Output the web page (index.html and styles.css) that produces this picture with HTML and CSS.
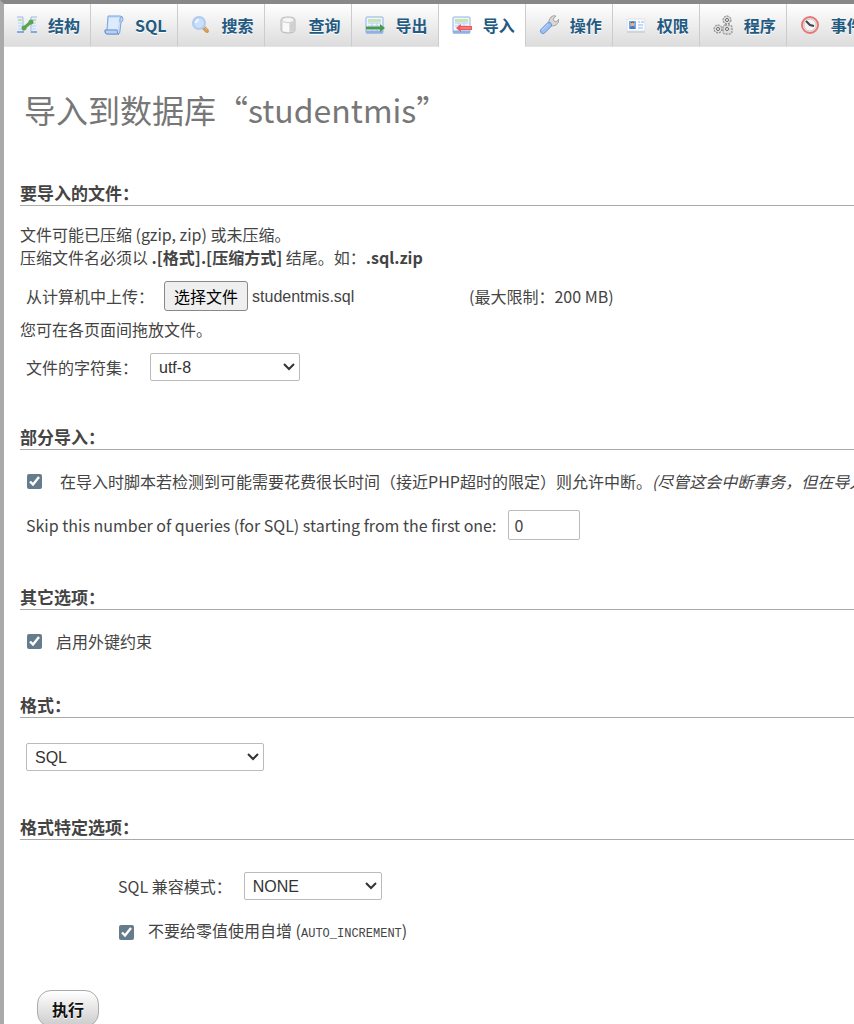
FILE: index.html
```html
<!DOCTYPE html>
<html lang="zh-CN">
<head>
    <meta charset="UTF-8">
    <meta name="viewport" content="width=device-width, initial-scale=1.0">
    <title>导入到数据库</title>
    <link rel="stylesheet" href="styles.css">
</head>
<body>

    <nav class="tabs">
        <a class="tab" href="#structure">
            <svg class="icon" viewBox="0 0 20 20">
                <path d="M0 2h6v16H0zM14 2h6v16h-6z" fill="#e6effb"/>
                <path d="M0 2h6v16M20 2h-6v16" fill="none" stroke="#9dbbe6"/>
                <path d="M1 5h4M15 5h4" stroke="#bfe0a8" stroke-width="2"/>
                <path d="M1 8h4M1 11h4M1 14h4M15 8h4M15 11h4M15 14h4" stroke="#bcd2ef"/>
                <path d="M0 17h7M14 17h6" stroke="#86a9dd" stroke-width="2"/>
                <path d="M7 13L14 7" stroke="#5aa650" stroke-width="3"/>
                <circle cx="7" cy="13" r="2.500" fill="#5aa650"/>
                <circle cx="14" cy="7" r="2.500" fill="#5aa650"/>
            </svg>
            结构
        </a>
        <a class="tab" href="#sql">
            <svg class="icon" viewBox="0 0 20 20">
                <path d="M4 1H16Q19 1 19 4Q19 7 17 7L16 16Q16 19 14 19H3Q1 19 1 17V15H3Z" fill="#c3dcfa" stroke="#7fa5d8"/>
                <path d="M5 3H15L14 14H4Z" fill="#dcebfe"/>
                <path d="M1 15H13Q13 19 15 19H3Q1 19 1 15Z" fill="#b5d2f6" stroke="#6c92c6"/>
                <path d="M16 7V4Q16 2 18 2" fill="none" stroke="#7fa5d8"/>
            </svg>
            SQL
        </a>
        <a class="tab" href="#search">
            <svg class="icon" viewBox="0 0 20 20">
                <path d="M12 12L16 16" stroke="#cf9c5b" stroke-width="4" stroke-linecap="round"/>
                <path d="M12 11L16 15" stroke="#e5bb7f" stroke-width="1"/>
                <circle cx="8" cy="8" r="6" fill="#c9dffa" stroke="#b1caee" stroke-width="2"/>
                <path d="M5 8Q5 5 8 5" fill="none" stroke="#eef6ff" stroke-width="2"/>
            </svg>
            搜索
        </a>
        <a class="tab" href="#query">
            <svg class="icon" viewBox="0 0 20 20">
                <path d="M3 5Q3 2 10 2T17 5V15Q17 18 10 18T3 15Z" fill="#e2e2e2" stroke="#b9b9b9"/>
                <path d="M5 7Q9 9 11 8V17Q7 17 5 16Z" fill="#f9f9f9"/>
                <path d="M12 8Q15 8 16 6V15Q15 17 12 17Z" fill="#d0d0d0"/>
                <ellipse cx="10" cy="5" rx="6" ry="2.500" fill="#f7f7f7" stroke="#d0d0d0"/>
            </svg>
            查询
        </a>
        <a class="tab" href="#export">
            <svg class="icon" viewBox="0 0 20 20">
                <rect x="1" y="2" width="17" height="16" rx="1" fill="#f0f6fe" stroke="#8fb1e3"/>
                <rect x="3" y="4" width="13" height="3" fill="#c9e3b3"/>
                <path d="M3 8h13M3 11h13M7 8v8M12 8v8" stroke="#b5cdee"/>
                <path d="M1 17h17" stroke="#8fb1e3" stroke-width="3"/>
                <path d="M1 13h15" stroke="#4b9a4b" stroke-width="3"/>
                <path d="M15 9L20 13L15 17Z" fill="#4b9a4b"/>
            </svg>
            导出
        </a>
        <a class="tab active" href="#import">
            <svg class="icon" viewBox="0 0 20 20">
                <rect x="1" y="2" width="17" height="16" rx="1" fill="#f0f6fe" stroke="#8fb1e3"/>
                <rect x="3" y="4" width="13" height="3" fill="#c9e3b3"/>
                <path d="M3 8h13M3 11h13M7 8v8M12 8v8" stroke="#b5cdee"/>
                <path d="M1 17h17" stroke="#8fb1e3" stroke-width="3"/>
                <path d="M8 13h12" stroke="#f25658" stroke-width="4"/>
                <path d="M9 9L4 13L9 17Z" fill="#f25658"/>
                <path d="M8 13h11" stroke="#ff9c9c"/>
            </svg>
            导入
        </a>
        <a class="tab" href="#operations">
            <svg class="icon" viewBox="0 0 20 20">
                <path d="M10 9Q9 5 12 2Q14 0 17 1L14 4L15 6L17 7L20 4Q20 8 17 10Q15 11 12 11Z" fill="#d8d8d8" stroke="#a5a5a5"/>
                <path d="M4 16L10 10" stroke="#7099d8" stroke-width="6" stroke-linecap="round"/>
                <path d="M4 16L10 10" stroke="#9dc0f2" stroke-width="4" stroke-linecap="round"/>
                <path d="M3 15L9 9" stroke="#c2dafb" stroke-width="1"/>
            </svg>
            操作
        </a>
        <a class="tab" href="#privileges">
            <svg class="icon" viewBox="0 0 20 20">
                <rect x="1" y="4" width="18" height="12" rx="1" fill="#fafcff" stroke="#dbe3ed"/>
                <rect x="3" y="6" width="7" height="8" fill="#70a8e8"/>
                <circle cx="6.500" cy="9" r="2" fill="#e8b88c"/>
                <path d="M5 8Q6 6 8 8" stroke="#61452d" fill="none"/>
                <path d="M4 14Q4 11 6.500 11T9 14Z" fill="#4a78b5"/>
                <path d="M12 7h2M15 7h3M12 10h5M12 13h5" stroke="#8eb4e2"/>
                <path d="M1 17h18" stroke="#b9c4d2"/>
            </svg>
            权限
        </a>
        <a class="tab" href="#routines">
            <svg class="icon" viewBox="0 0 20 20">
                <g fill="#dcdcdc" stroke="#777" stroke-dasharray="2 1">
                    <circle cx="14" cy="5" r="4"/>
                    <circle cx="5" cy="14" r="4"/>
                    <rect x="10" y="10" width="9" height="9" rx="2"/>
                </g>
                <g fill="#fff" stroke="#666">
                    <circle cx="14" cy="5" r="1.500"/>
                    <circle cx="5" cy="14" r="1.500"/>
                    <circle cx="14" cy="14" r="1.500"/>
                </g>
            </svg>
            程序
        </a>
        <a class="tab" href="#events">
            <svg class="icon" viewBox="0 0 20 20">
                <circle cx="10" cy="10" r="8" fill="#ececec" stroke="#e87674" stroke-width="2"/>
                <circle cx="10" cy="10" r="6" fill="#f4f4f4" stroke="#c9caca"/>
                <path d="M6 6L10 10L14 11" fill="none" stroke="#444" stroke-width="2"/>
            </svg>
            事件
        </a>
    </nav>

    <main class="page">
        <h1>导入到数据库“studentmis”</h1>

        <form class="import-form">
            <section>
                <h2>要导入的文件：</h2>
                <p class="intro">
                    文件可能已压缩 (gzip, zip) 或未压缩。<br>
                    压缩文件名必须以 <b>.[格式].[压缩方式]</b> 结尾。如：<b>.sql.zip</b>
                </p>
                <div class="row upload">
                    <label for="importFile">从计算机中上传：</label>
                    <input type="file" id="importFile" hidden>
                    <div class="file-picker">
                        <button type="button" class="file-button" id="fileButton">选择文件</button>
                        <span id="fileName">studentmis.sql</span>
                    </div>
                    <span>(最大限制：200 MB)</span>
                </div>
                <p class="drag-note">您可在各页面间拖放文件。</p>
                <div class="row">
                    <label for="charset">文件的字符集：</label>
                    <select id="charset" class="charset">
                        <option>utf-8</option>
                        <option>gbk</option>
                    </select>
                </div>
            </section>

            <section class="partial">
                <h2>部分导入：</h2>
                <div class="row check-row wide">
                    <input type="checkbox" id="allowInterrupt" checked>
                    <label for="allowInterrupt">在导入时脚本若检测到可能需要花费很长时间（接近PHP超时的限定）则允许中断。<i>(尽管这会中断事务，但在导入大文件时是个很好的方法。)</i></label>
                </div>
                <div class="row skip">
                    <label for="skipQueries">Skip this number of queries (for SQL) starting from the first one:</label>
                    <input type="text" id="skipQueries" value="0">
                </div>
            </section>

            <section class="other">
                <h2>其它选项：</h2>
                <div class="row check-row">
                    <input type="checkbox" id="foreignKeys" checked>
                    <label for="foreignKeys">启用外键约束</label>
                </div>
            </section>

            <section class="format">
                <h2>格式：</h2>
                <div class="row">
                    <select class="format-select" aria-label="格式">
                        <option>SQL</option>
                        <option>CSV</option>
                    </select>
                </div>
            </section>

            <section class="format-options">
                <h2>格式特定选项：</h2>
                <div class="row">
                    <label for="compat">SQL 兼容模式：</label>
                    <select id="compat" class="compat">
                        <option>NONE</option>
                        <option>ANSI</option>
                    </select>
                </div>
                <div class="row check-row">
                    <input type="checkbox" id="autoIncrement" checked>
                    <label for="autoIncrement">不要给零值使用自增 (<code>AUTO_INCREMENT</code>)</label>
                </div>
            </section>

            <button type="submit" class="submit">执行</button>
        </form>
    </main>

    <script>
        const fileInput = document.getElementById("importFile");

        // Open the file dialog from the styled button
        document.getElementById("fileButton").addEventListener("click", function() {
            fileInput.click();
        });

        // Show the name of the selected file
        fileInput.addEventListener("change", function() {
            if (fileInput.files.length > 0) {
                document.getElementById("fileName").textContent = fileInput.files[0].name;
            }
        });
    </script>

</body>
</html>
```
FILE: styles.css
```css
* {
    box-sizing: border-box;
}
html {
    overflow: hidden;
}
body {
    margin: 0;
    min-height: 100vh;
    border-top: 4px solid #888;
    border-left: 4px solid #aaa;
    background-color: #fff;
    color: #444;
    font-family: "Noto Sans CJK SC", sans-serif;
    font-size: 16px;
    line-height: 23px;
}
.tabs {
    display: flex;
    overflow: hidden;
}
.tab {
    display: flex;
    flex-shrink: 0;
    align-items: center;
    gap: 11px;
    height: 43px;
    padding: 0 10px 0 13px;
    border-right: 1px solid #ccc;
    border-bottom: 1px solid #e4e4e4;
    background: linear-gradient(#fff, #dcdcdc);
    color: #235a81;
    font-weight: bold;
    text-decoration: none;
    text-shadow: 0 1px 0 #fff;
}
.tab.active {
    background: #fff;
    border-bottom-color: #fff;
}
.icon {
    width: 20px;
    height: 20px;
}
.page {
    padding: 38px 0 0 16px;
}
h1 {
    margin: 0 0 48px;
    padding-left: 4px;
    color: #777;
    font-size: 32px;
    font-weight: normal;
    line-height: 48px;
}
h2 {
    margin: 0 0 20px;
    border-bottom: 1px solid #aaa;
    font-size: 17px;
    line-height: 24px;
}
p {
    margin: 0;
}
section {
    margin-bottom: 44px;
}
.row {
    display: flex;
    align-items: center;
    gap: 12px;
    padding-left: 6px;
}
.intro {
    margin-top: -3px;
}
.upload {
    gap: 10px;
    margin-top: 12px;
}
.file-picker {
    display: flex;
    align-items: center;
    gap: 4px;
    width: 295px;
    font-family: "Liberation Sans", sans-serif;
}
.file-button {
    height: 30px;
    padding: 0 9px;
    border: 1px solid #888;
    border-radius: 3px;
    background-color: #efefef;
    color: #000;
    font-family: "Noto Sans CJK SC", sans-serif;
    font-size: 16px;
}
.drag-note {
    margin: 7px 0 12px;
}
select {
    height: 28px;
    padding: 0 24px 0 8px;
    border: 1px solid #bbb;
    border-radius: 2px;
    appearance: none;
    background: #fff url("data:image/svg+xml,%3Csvg xmlns='http://www.w3.org/2000/svg' width='12' height='8'%3E%3Cpath d='M1 1L6 6L11 1' fill='none' stroke='%23333' stroke-width='2'/%3E%3C/svg%3E") no-repeat right 4px center;
    color: #333;
    font-family: "Liberation Sans", sans-serif;
    font-size: 16px;
}
.charset {
    width: 150px;
}
.compat {
    width: 138px;
}
.check-row input {
    flex-shrink: 0;
    width: 15px;
    height: 15px;
    margin: 0 2px 0 1px;
    accent-color: #647c8c;
}
.wide {
    gap: 16px;
    overflow: hidden;
    white-space: nowrap;
}
.skip {
    gap: 12px;
    margin-top: 17px;
}
.skip input {
    width: 72px;
    height: 30px;
    padding: 0 5px;
    border: 1px solid #bbb;
    border-radius: 2px;
    color: #444;
    font-family: "Noto Sans CJK SC", sans-serif;
    font-size: 16px;
}
.partial {
    margin-bottom: 45px;
}
.other {
    margin-bottom: 40px;
}
.format h2 {
    margin-bottom: 25px;
}
.format-select {
    width: 238px;
}
.format-options h2 {
    margin-bottom: 32px;
}
.format-options .row {
    padding-left: 98px;
}
.format-options .check-row {
    margin-top: 19px;
}
code {
    font-family: "Liberation Mono", monospace;
    font-size: 12px;
}
.submit {
    height: 37px;
    margin-left: 17px;
    padding: 0 14px;
    border: 1px solid #aaa;
    border-radius: 14px;
    background: linear-gradient(#fff, #ccc);
    color: #111;
    font-family: "Noto Sans CJK SC", sans-serif;
    font-size: 16px;
    font-weight: bold;
    text-shadow: 0 1px 0 #fff;
}
```
